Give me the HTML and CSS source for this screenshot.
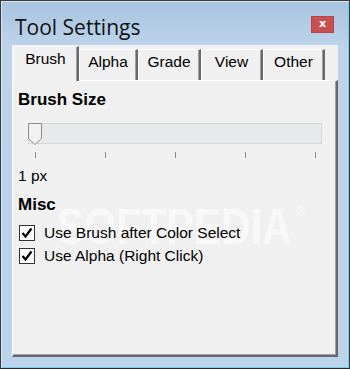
FILE: index.html
```html
<!DOCTYPE html>
<html lang="en">
<head>
    <meta charset="UTF-8">
    <meta name="viewport" content="width=device-width, initial-scale=1.0">
    <title>Tool Settings</title>
    <link rel="stylesheet" href="styles.css">
</head>
<body>
    <div class="window">

        <div class="titleBar">
            <span class="title">Tool Settings</span>
            <div class="closeBtn">x</div>
        </div>

        <div class="client">

            <div class="tabs">
                <div class="tab selected">Brush</div>
                <div class="tab tabAlpha">Alpha</div>
                <div class="tab tabGrade">Grade</div>
                <div class="tab tabView">View</div>
                <div class="tab tabOther">Other</div>
            </div>

            <div class="page">

                <!-- faint watermark behind the controls -->
                <div class="watermark">SOFTPEDIA<span class="reg">&reg;</span></div>

                <p class="heading">Brush Size</p>

                <div class="slider">
                    <div class="track">
                        <!-- slider thumb, pointy at the bottom -->
                        <svg class="thumb" width="14" height="22" viewBox="0 0 14 22">
                            <path d="M0.5 0.5 H13.5 V15.5 L7 21.5 L0.5 15.5 Z" fill="#f2f2f2" stroke="#8c8c8c"/>
                        </svg>
                    </div>
                    <div class="ticks">
                        <span></span><span></span><span></span><span></span><span></span>
                    </div>
                </div>

                <p class="value">1 px</p>

                <p class="heading misc">Misc</p>

                <label class="check">
                    <span class="box">
                        <svg width="14" height="14" viewBox="0 0 14 14">
                            <path d="M2.5 7 L5.5 10.5 L11.5 2.5" fill="none" stroke="#000" stroke-width="2.2"/>
                        </svg>
                    </span>
                    Use Brush after Color Select
                </label>

                <label class="check">
                    <span class="box">
                        <svg width="14" height="14" viewBox="0 0 14 14">
                            <path d="M2.5 7 L5.5 10.5 L11.5 2.5" fill="none" stroke="#000" stroke-width="2.2"/>
                        </svg>
                    </span>
                    Use Alpha (Right Click)
                </label>

            </div>

        </div>

    </div>
</body>
</html>
```

FILE: styles.css
```css
* {
    margin: 0;
    padding: 0;
    box-sizing: border-box;
}

body {
    width: 350px;
    height: 369px;
    overflow: hidden;
    font-family: 'Liberation Sans', Arial, sans-serif;
    color: #000;
}

.window {
    display: flex;
    flex-direction: column;
    width: 350px;
    height: 369px;
    border: 1px solid #3a3a3a;
    border-bottom-color: #2a2a2a;
    background: linear-gradient(#a8c3df, #bcd3ea 45px, #bcd4eb);
    box-shadow: inset 1px 1px 0 #d9e6f3, inset -1px -1px 0 #6fd0f0;
}

.titleBar {
    display: flex;
    align-items: flex-start;
    height: 44px;
}

.title {
    margin-top: 12px;
    margin-left: 14px;
    font-family: 'Segoe UI', 'Open Sans', sans-serif;
    font-size: 21px;
    line-height: 28px;
    color: #111;
}

.closeBtn {
    margin-top: 15px;
    margin-left: auto;
    margin-right: 15px;
    width: 23px;
    height: 17px;
    background-color: #c75050;
    border: 1px solid #b84545;
    color: white;
    font-family: 'DejaVu Sans', sans-serif;
    font-weight: bold;
    font-size: 11px;
    line-height: 14px;
    text-align: center;
}

.client {
    display: flex;
    flex-direction: column;
    flex: 1;
    margin: 0 11px 11px 11px;
    background-color: #f0f0f0;
}

.tabs {
    display: flex;
    align-items: flex-end;
    height: 35px;
    padding-left: 1px;
}

.tab {
    height: 31px;
    padding-top: 3px;
    font-size: 15.5px;
    line-height: 18px;
    text-align: center;
    background-color: #f0f0f0;
    border-top: 1px solid #ffffff;
    border-left: 1px solid #ffffff;
    border-right: 2px solid #696969;
    box-shadow: inset -1px 0 0 #a0a0a0;
}

.tab.selected {
    position: relative;
    z-index: 1;
    width: 66px;
    height: 35px;
    margin-bottom: -1px;
}

.tabAlpha { width: 59px; }
.tabGrade { width: 63px; }
.tabView { width: 62px; }
.tabOther { width: 62px; }

.page {
    position: relative;
    flex: 1;
    padding: 9px 0 0 5px;
    border-top: 1px solid #ffffff;
    border-left: 1px solid #ffffff;
    border-right: 2px solid #696969;
    border-bottom: 2px solid #696969;
    box-shadow: inset -1px -1px 0 #a0a0a0;
}

.page > * {
    position: relative;
}

.heading {
    font-size: 17px;
    font-weight: bold;
    line-height: 20px;
}

.slider {
    width: 294px;
    margin: 13px 0 0 10px;
}

.track {
    height: 21px;
    background-color: #e7eaea;
    border: 1px solid #d6d6d6;
}

.thumb {
    display: block;
    margin: -1px 0 0 -1px;
}

.ticks {
    display: flex;
    justify-content: space-between;
    height: 6px;
    margin-top: 8px;
    padding: 0 6px 0 7px;
}

.ticks span {
    width: 1px;
    height: 6px;
    background-color: #8a8a8a;
}

.value {
    margin-top: 9px;
    font-size: 15.5px;
    line-height: 18px;
}

.misc {
    margin-top: 10px;
}

.check {
    display: flex;
    align-items: center;
    gap: 9px;
    height: 23px;
    padding-left: 1px;
    font-size: 15.5px;
}

.misc + .check {
    margin-top: 6px;
}

.box {
    display: flex;
    justify-content: center;
    align-items: center;
    width: 16px;
    height: 16px;
    background-color: #ffffff;
    border: 1px solid #333333;
}

.page > .watermark {
    position: absolute;
    left: 44px;
    top: 121px;
    font-family: 'Liberation Sans', sans-serif;
    font-weight: bold;
    font-size: 41px;
    line-height: 42px;
    color: rgba(255, 255, 255, 0.6);
    transform: scaleY(1.2);
    transform-origin: top left;
    pointer-events: none;
}

.reg {
    position: absolute;
    top: 2px;
    right: -14px;
    font-size: 12px;
    line-height: 12px;
    font-weight: normal;
}
```
